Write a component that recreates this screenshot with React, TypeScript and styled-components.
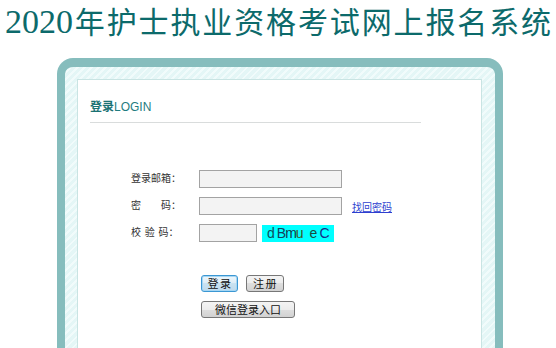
import React from "react";
import styled, { createGlobalStyle } from "styled-components";

const Global = createGlobalStyle`
  html, body { margin: 0; padding: 0; background: #ffffff; }
  body { font-family: "Liberation Sans", "Noto Sans CJK SC", sans-serif; overflow: hidden; }
`;

const Page = styled.div`
  width: 556px;
  height: 348px;
  overflow: hidden;
`;

const Title = styled.h1`
  box-sizing: border-box;
  width: 546px;
  margin: 0 0 0 5px;
  height: 44px;
  font-family: "Noto Sans CJK SC", sans-serif;
  font-size: 30px;
  line-height: 40px;
  font-weight: normal;
  color: #0c6a6b;
  text-align: justify;
  text-align-last: justify;
  text-justify: inter-character;
  white-space: nowrap;
`;

const Year = styled.span`
  font-family: "Liberation Serif", "Times New Roman", serif;
  font-size: 34px;
`;

const Frame = styled.div`
  box-sizing: border-box;
  width: 446px;
  height: 300px;
  margin: 14px 0 0 57px;
  border: 8px solid #86bdbd;
  border-top-width: 9px;
  border-bottom: none;
  border-radius: 16px 16px 0 0;
  padding: 12px 13px 0 12px;
  background-color: #e4f6f6;
  background-image: repeating-linear-gradient(
    135deg,
    #e4f6f6 0px,
    #e4f6f6 3px,
    #f1fbfb 3px,
    #f1fbfb 5px
  );
`;

const Sheet = styled.div`
  box-sizing: border-box;
  height: 100%;
  background: #ffffff;
  border: 1px solid #c9e4e3;
  border-bottom: none;
`;

const Heading = styled.div`
  width: 331px;
  margin-left: 12px;
  padding-top: 19px;
  padding-bottom: 7px;
  border-bottom: 1px solid #d9dcdc;
  font-size: 12px;
  line-height: 16px;
  color: #1f7c80;
`;

const HeadingCn = styled.span`
  font-weight: bold;
  color: #1b7273;
`;

const Form = styled.div`
  margin: 47px 0 0 53px;
  display: grid;
  grid-template-columns: 68px auto;
  row-gap: 9px;
  align-items: center;
`;

const Label = styled.label`
  font-size: 10px;
  line-height: 18px;
  color: #333333;
  white-space: pre;
  word-spacing: 1px;
`;

const Field = styled.div`
  display: flex;
  align-items: center;
`;

const Input = styled.input<{ $w: number }>`
  box-sizing: border-box;
  width: ${(p) => p.$w}px;
  height: 18px;
  margin: 0;
  padding: 0 3px;
  border: 1px solid #a3a3a3;
  background: #f3f3f3;
  outline: none;
`;

const Link = styled.a`
  margin-left: 10px;
  font-size: 10px;
  color: #2e3fcf;
  text-decoration: underline;
`;

const Captcha = styled.div`
  box-sizing: border-box;
  margin-left: 5px;
  width: 72px;
  height: 17px;
  background: #00ffff;
  display: flex;
  align-items: center;
  padding-left: 5px;
  font-family: "Liberation Sans", sans-serif;
  font-size: 14px;
  line-height: 17px;
`;

const Ch = styled.span<{ $c: string; $ml: number }>`
  color: ${(p) => p.$c};
  margin-left: ${(p) => p.$ml}px;
`;

const Actions = styled.div`
  margin: 33px 0 0 123px;
  display: flex;
  flex-direction: column;
  align-items: flex-start;
  gap: 9px;
`;

const ButtonRow = styled.div`
  display: flex;
  gap: 8px;
`;

const Button = styled.button<{ $w: number; $focus?: boolean; $spread?: boolean }>`
  box-sizing: border-box;
  width: ${(p) => p.$w}px;
  height: 17px;
  margin: 0;
  padding: 0 0 0 ${(p) => (p.$spread ? 1 : 0)}px;
  font-family: "Noto Sans CJK SC", sans-serif;
  font-size: 11px;
  line-height: 15px;
  letter-spacing: ${(p) => (p.$spread ? 1.5 : 0)}px;
  color: #111111;
  border-radius: 3px;
  border: 1px solid ${(p) => (p.$focus ? "#3b97d3" : "#777777")};
  box-shadow: ${(p) => (p.$focus ? "inset 0 0 0 1px #a6d6f3" : "none")};
  background: ${(p) =>
    p.$focus
      ? "linear-gradient(#eef7fc, #dcecf6 50%, #c9e2f1 50%, #bfdaec)"
      : "linear-gradient(#f4f4f4, #ececec 50%, #dedede 50%, #d2d2d2)"};
  white-space: pre;
`;

export default function App() {
  return (
    <Page>
      <Global />
      <Title>
        <Year>2020</Year>年护士执业资格考试网上报名系统
      </Title>
      <Frame>
        <Sheet>
          <Heading>
            <HeadingCn>登录</HeadingCn>LOGIN
          </Heading>
          <Form>
            <Label>登录邮箱：</Label>
            <Field>
              <Input $w={143} />
            </Field>
            <Label>{"密\u3000\u3000码："}</Label>
            <Field>
              <Input $w={143} type="password" />
              <Link href="#">找回密码</Link>
            </Field>
            <Label>{"校 验 码："}</Label>
            <Field>
              <Input $w={58} />
              <Captcha>
                <Ch $c="#0d4d5c" $ml={0}>d</Ch>
                <Ch $c="#15405e" $ml={2}>B</Ch>
                <Ch $c="#163a4c" $ml={-1}>m</Ch>
                <Ch $c="#3f5a24" $ml={-1}>u</Ch>
                <Ch $c="#1d4a3c" $ml={6}>e</Ch>
                <Ch $c="#1a2a86" $ml={2}>C</Ch>
              </Captcha>
            </Field>
          </Form>
          <Actions>
            <ButtonRow>
              <Button $w={37} $focus $spread>登录</Button>
              <Button $w={38} $spread>注册</Button>
            </ButtonRow>
            <Button $w={94}>微信登录入口</Button>
          </Actions>
        </Sheet>
      </Frame>
    </Page>
  );
}
